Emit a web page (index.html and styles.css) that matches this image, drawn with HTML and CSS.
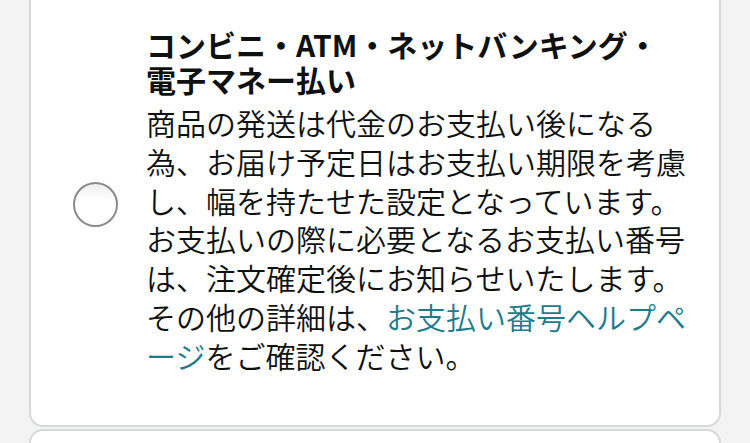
FILE: index.html
```html
<!DOCTYPE html>
<html lang="ja">
<head>
<meta charset="utf-8">
<link rel="stylesheet" href="styles.css">
</head>
<body>
<div class="page">
  <div class="card">
    <div class="radio-col"><span class="radio"></span></div>
    <div class="content">
      <div class="title">コンビニ・ATM・ネットバンキング・<br>電子マネー払い</div>
      <div class="desc">商品の発送は代金のお支払い後になる為、お届け予定日はお支払い期限を考慮し、幅を持たせた設定となっています。お支払いの際に必要となるお支払い番号は、注文確定後にお知らせいたします。その他の詳細は、<a class="link" href="#">お支払い番号ヘルプページ</a>をご確認ください。</div>
    </div>
  </div>
  <div class="card next"></div>
</div>
</body>
</html>
```
FILE: styles.css
```css
html, body {
  margin: 0;
  padding: 0;
  background: #f3f3f3;
  overflow: hidden;
}
.page {
  padding: 0 29px;
  margin-top: -16px;
  display: flex;
  flex-direction: column;
  gap: 2px;
  font-family: "Noto Sans CJK JP", "Noto Sans", sans-serif;
  color: #0f1111;
}
.card {
  background: #fff;
  border: 2px solid #d5d9d9;
  border-radius: 14px;
  display: flex;
  align-items: center;
  padding: 0 0 50px 0;
}
.card.next {
  height: 60px;
  padding: 0;
}
.radio-col {
  width: 115px;
  flex: none;
  display: flex;
  justify-content: flex-start;
  padding-left: 42px;
  box-sizing: border-box;
  align-self: center;
  margin-top: 48px;
}
.radio {
  width: 45px;
  height: 45px;
  box-sizing: border-box;
  border-radius: 50%;
  border: 2px solid #8b8b8b;
  background: linear-gradient(#efefef, #ffffff 40%);
  display: block;
}
.content {
  width: 552px;
  padding-top: 41px;
}
.title {
  font-size: 30px;
  font-weight: 700;
  line-height: 35px;
  margin-bottom: 6px;
}
.desc {
  font-size: 30px;
  line-height: 38.8px;
  font-weight: 350;
  line-break: normal;
}
.link {
  color: #1f7a8a;
  text-decoration: none;
}
```
